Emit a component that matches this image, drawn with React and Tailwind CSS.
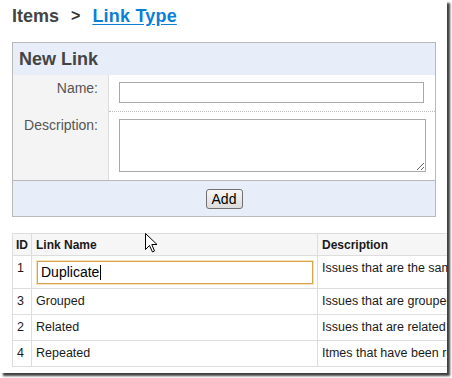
export default function App() {
  const font = { fontFamily: '"Liberation Sans", Arial, sans-serif' };
  return (
    <div className="relative w-[452px] h-[378px] bg-white" style={font}>
      <div className="relative w-[447px] h-[373px] overflow-hidden bg-white shadow-[3px_3px_2px_rgba(0,0,0,0.75)]">
        <div className="pl-[12px] pt-[5px]">
          <div className="flex items-center h-[22px] leading-[22px] text-[18px] font-bold">
            <span className="text-[#444444]">Items</span>
            <span className="ml-[12px] text-[#333333] text-[16px]">&gt;</span>
            <a href="#" className="ml-[12px] text-[#0b7fd6] underline underline-offset-2 tracking-[0.2px]">
              Link Type
            </a>
          </div>

          <div className="mt-[15px] w-[424px] border border-[#b9b9b9]">
            <div className="h-[32px] bg-[#e8eef9] pl-[6px] flex items-center text-[18px] font-bold text-[#444444]">
              New Link
            </div>
            <div className="grid grid-cols-[96px_1fr]">
              <div className="h-[37px] bg-[#f4f4f4] border-r border-[#dddddd] text-right pr-[10px] pt-[5px] text-[14px] leading-[16px] text-[#555555]">
                Name:
              </div>
              <div className="h-[37px] border-b border-dotted border-[#bbbbbb] pl-[10px] pt-[7px]">
                <input
                  type="text"
                  className="block w-[305px] h-[21px] border border-[#a9a9a9] bg-white outline-none"
                />
              </div>
              <div className="h-[68px] bg-[#f4f4f4] border-r border-[#dddddd] text-right pr-[10px] pt-[5px] text-[14px] leading-[16px] text-[#555555]">
                Description:
              </div>
              <div className="h-[68px] pl-[10px] pt-[7px]">
                <textarea className="block w-[307px] h-[53px] border border-[#a9a9a9] bg-white outline-none" />
              </div>
            </div>
            <div className="h-[36px] bg-[#e8eef9] border-t border-[#b9b9b9] flex justify-center pt-[8px]">
              <button className="h-[20px] w-[37px] rounded-[3px] border border-[#707070] bg-gradient-to-b from-[#f6f6f6] to-[#dcdcdc] text-[14px] leading-[18px] text-black">
                Add
              </button>
            </div>
          </div>

          <table className="mt-[16px] table-fixed border-collapse w-[640px] text-[12.5px] text-[#1a1a1a]">
            <colgroup>
              <col className="w-[19px]" />
              <col className="w-[286px]" />
              <col className="w-[335px]" />
            </colgroup>
            <thead>
              <tr className="h-[22px] bg-[#f6f6f6]">
                <th className="border border-[#dddddd] text-left font-bold text-[12px] pl-[3px]">ID</th>
                <th className="border border-[#dddddd] text-left font-bold text-[12px] pl-[4px]">Link Name</th>
                <th className="border border-[#dddddd] text-left font-bold text-[12px] pl-[4px]">Description</th>
              </tr>
            </thead>
            <tbody>
              <tr>
                <td className="border border-[#dddddd] align-top pl-[4px] pt-[5px] leading-[15px]">1</td>
                <td className="border border-[#dddddd] align-top px-[5px] pt-[5px] pb-[4px]">
                  <div className="h-[23px] w-[276px] border border-[#d9a24c] shadow-[0_0_0_1px_#f5e2bd] bg-white flex items-center pl-[3px] text-[14px] text-black">
                    Duplicate
                    <span className="inline-block w-[1px] h-[15px] bg-black ml-[1px]" />
                  </div>
                </td>
                <td className="border border-[#dddddd] align-top pl-[4px] pt-[5px] leading-[15px] whitespace-nowrap overflow-hidden">
                  Issues that are the same
                </td>
              </tr>
              <tr className="h-[26px]">
                <td className="border border-[#dddddd] pl-[4px]">3</td>
                <td className="border border-[#dddddd] pl-[4px]">Grouped</td>
                <td className="border border-[#dddddd] pl-[4px] whitespace-nowrap overflow-hidden">Issues that are grouped</td>
              </tr>
              <tr className="h-[26px]">
                <td className="border border-[#dddddd] pl-[4px]">2</td>
                <td className="border border-[#dddddd] pl-[4px]">Related</td>
                <td className="border border-[#dddddd] pl-[4px] whitespace-nowrap overflow-hidden">Issues that are related to</td>
              </tr>
              <tr className="h-[26px]">
                <td className="border border-[#dddddd] pl-[4px]">4</td>
                <td className="border border-[#dddddd] pl-[4px]">Repeated</td>
                <td className="border border-[#dddddd] pl-[4px] whitespace-nowrap overflow-hidden">Itmes that have been re</td>
              </tr>
            </tbody>
          </table>
        </div>

        <svg
          className="absolute left-[145px] top-[233px]"
          width="13"
          height="20"
          viewBox="0 0 13 20"
        >
          <path
            d="M0.5 0.5 L0.5 16.5 L4.5 12.5 L7.5 19 L9.5 18 L6.8 11.5 L12 11.5 Z"
            fill="white"
            stroke="black"
            strokeWidth="1"
            strokeLinejoin="miter"
          />
        </svg>
      </div>
    </div>
  );
}
